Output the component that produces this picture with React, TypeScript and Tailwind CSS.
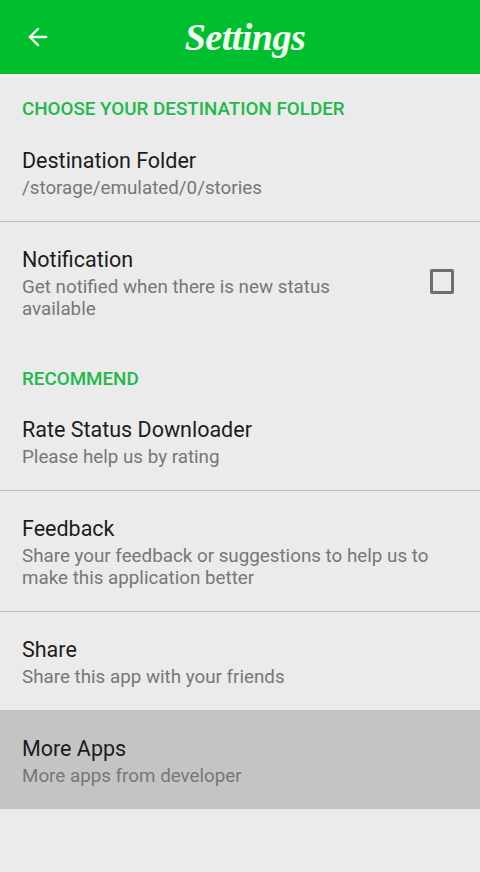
import React from "react";
import { ArrowLeft } from "lucide-react";

const SectionTitle = ({ label, className }: { label: string; className: string }) => (
    <div className={`px-[22px] text-[18.8px] leading-6 font-medium text-[#22b84a] ${className}`}>{label}</div>
);

const Row = ({ title, sub, divider, active, checkbox }: { title: string; sub: string; divider?: boolean; active?: boolean; checkbox?: boolean }) => (
    <div className={`${active ? "bg-[#c4c4c4] pt-[1px]" : ""} ${divider ? "border-b border-[#bcbcbc]" : ""}`}>
        <div className="flex items-start pl-[22px] pr-[26px] pt-6 pb-[22px]">
            <div className={checkbox ? "w-[340px]" : "flex-1"}>
                <div className="text-[21.5px] leading-[28px] text-[#1c1c1c]">{title}</div>
                <div className="mt-[2px] text-[18.8px] leading-[22px] text-[#777777]">{sub}</div>
            </div>
            {checkbox && <div className="ml-auto mt-[23px] h-[25px] w-6 rounded-[2px] border-[3px] border-[#6e6e6e]" />}
        </div>
    </div>
);

export default function App() {
    return (
        <div className="flex h-[872px] w-[480px] flex-col overflow-hidden bg-[#ebebeb] font-['Roboto',sans-serif]">
            <header className="relative flex h-[74px] shrink-0 items-center justify-center bg-[#00bf2f] pl-[10px]">
                <ArrowLeft className="absolute left-[24px] top-[23px] text-[#f0fbf0]" size={28} strokeWidth={2} />
                <span className="font-['Liberation_Serif',serif] text-[38px] font-bold italic leading-none tracking-[-0.5px] text-[#f4fff4]">Settings</span>
            </header>
            <div className="h-[3px] shrink-0 bg-[#f0f5f0]" />
            <SectionTitle label="CHOOSE YOUR DESTINATION FOLDER" className="pt-5 pb-[2px]" />
            <Row title="Destination Folder" sub="/storage/emulated/0/stories" divider />
            <Row title="Notification" sub="Get notified when there is new status available" checkbox />
            <SectionTitle label="RECOMMEND" className="pt-[25px] pb-[1px]" />
            <Row title="Rate Status Downloader" sub="Please help us by rating" divider />
            <Row title="Feedback" sub="Share your feedback or suggestions to help us to make this application better" divider />
            <Row title="Share" sub="Share this app with your friends" />
            <Row title="More Apps" sub="More apps from developer" active />
        </div>
    );
}
